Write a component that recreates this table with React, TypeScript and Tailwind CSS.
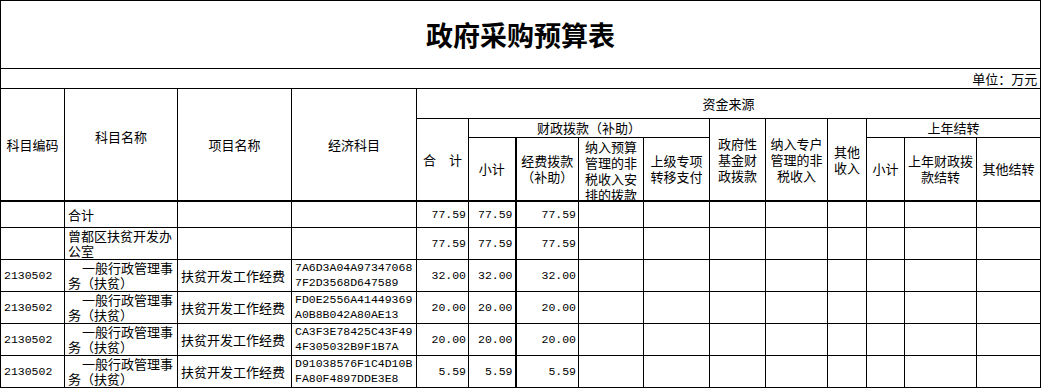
import type { ReactNode } from 'react'

type Row = {
  code: string
  name: string[]
  indent?: boolean
  proj: string
  econ: string[]
  total: string
}

const ROWS: Row[] = [
  { code: '', name: ['合计'], proj: '', econ: [], total: '77.59' },
  { code: '', name: ['曾都区扶贫开发办', '公室'], proj: '', econ: [], total: '77.59' },
  { code: '2130502', name: ['一般行政管理事', '务（扶贫）'], indent: true, proj: '扶贫开发工作经费', econ: ['7A6D3A04A97347068', '7F2D3568D647589'], total: '32.00' },
  { code: '2130502', name: ['一般行政管理事', '务（扶贫）'], indent: true, proj: '扶贫开发工作经费', econ: ['FD0E2556A41449369', 'A0B8B042A80AE13'], total: '20.00' },
  { code: '2130502', name: ['一般行政管理事', '务（扶贫）'], indent: true, proj: '扶贫开发工作经费', econ: ['CA3F3E78425C43F49', '4F305032B9F1B7A'], total: '20.00' },
  { code: '2130502', name: ['一般行政管理事', '务（扶贫）'], indent: true, proj: '扶贫开发工作经费', econ: ['D91038576F1C4D10B', 'FA80F4897DDE3E8'], total: '5.59' },
]

const COLS = [
  'w-[64px]', 'w-[113px]', 'w-[114px]', 'w-[125px]', 'w-[52px]', 'w-[47px]', 'w-[63px]', 'w-[65px]',
  'w-[66px]', 'w-[56px]', 'w-[62px]', 'w-[39px]', 'w-[38px]', 'w-[72px]', 'w-[64px]',
]

const cell = 'border border-black p-0'
const mono = "font-['Liberation_Mono',monospace] text-[11.5px]"

function Lines({ lines }: { lines: string[] }) {
  return <>{lines.map((l, i) => <div key={i}>{l}</div>)}</>
}

function Num({ v, thick, top }: { v: string; thick?: boolean; top?: string }) {
  return (
    <td className={`${cell} ${top} ${thick ? 'border-l-2' : ''} text-right pr-[2px] ${mono}`}>{v}</td>
  )
}

function Head({ children, className = '', ...rest }: { children?: ReactNode; className?: string; rowSpan?: number; colSpan?: number }) {
  return <td {...rest} className={`${cell} text-center ${className}`}>{children}</td>
}

export default function App() {
  return (
    <div className="bg-white w-[1043px] h-[388px] overflow-hidden text-black font-['Noto_Sans_CJK_SC',sans-serif] text-[13px] leading-4">
      <table className="table-fixed border-collapse w-[1041px]">
        <colgroup>
          {COLS.map((w, i) => <col key={i} className={w} />)}
        </colgroup>
        <tbody>
          <tr className="h-[68px]">
            <td colSpan={15} className={`${cell} text-center text-[27px] font-bold leading-none`}>政府采购预算表</td>
          </tr>
          <tr className="h-[20px]">
            <td colSpan={15} className={`${cell} text-right pr-[3px]`}>单位：万元</td>
          </tr>

          {/* header */}
          <tr className="h-[30px]">
            <Head rowSpan={3} className="border-b-2">科目编码</Head>
            <Head rowSpan={3} className="border-b-2 pb-4">科目名称</Head>
            <Head rowSpan={3} className="border-b-2">项目名称</Head>
            <Head rowSpan={3} className="border-b-2">经济科目</Head>
            <Head colSpan={11}>资金来源</Head>
          </tr>
          <tr className="h-[19px]">
            <Head rowSpan={2} className="border-b-2">
              <div className="flex justify-between px-[6px]"><span>合</span><span>计</span></div>
            </Head>
            <Head colSpan={4}>财政拨款（补助）</Head>
            <Head rowSpan={2} className="border-b-2"><Lines lines={['政府性', '基金财', '政拨款']} /></Head>
            <Head rowSpan={2} className="border-b-2"><Lines lines={['纳入专户', '管理的非', '税收入']} /></Head>
            <Head rowSpan={2} className="border-b-2"><Lines lines={['其他', '收入']} /></Head>
            <Head colSpan={3}>上年结转</Head>
          </tr>
          <tr className="h-[63px]">
            <Head className="border-b-2">小计</Head>
            <Head className="border-b-2 border-l-2"><Lines lines={['经费拨款', '（补助）']} /></Head>
            <Head className="border-b-2">
              <div className="h-[62px] overflow-hidden pt-[1px]">
                <Lines lines={['纳入预算', '管理的非', '税收入安', '排的拨款']} />
              </div>
            </Head>
            <Head className="border-b-2"><Lines lines={['上级专项', '转移支付']} /></Head>
            <Head className="border-b-2">小计</Head>
            <Head className="border-b-2"><Lines lines={['上年财政拨', '款结转']} /></Head>
            <Head className="border-b-2">其他结转</Head>
          </tr>

          {/* data */}
          {ROWS.map((r, i) => {
            const top = i === 0 ? 'border-t-2' : ''
            return (
              <tr key={i} className={`leading-[15px] ${i === 0 ? 'h-[26px]' : 'h-[32px]'}`}>
                <td className={`${cell} ${top} pl-[3px] ${mono}`}>{r.code}</td>
                <td className={`${cell} ${top} pl-[3px] whitespace-nowrap`}>
                  {r.name.map((l, j) => (
                    <div key={j} className={r.indent && j === 0 ? 'pl-[14px]' : ''}>{l}</div>
                  ))}
                </td>
                <td className={`${cell} ${top} pl-[3px] whitespace-nowrap`}>{r.proj}</td>
                <td className={`${cell} ${top} pl-[3px] whitespace-nowrap ${mono}`}>
                  <Lines lines={r.econ} />
                </td>
                <Num v={r.total} top={top} />
                <Num v={r.total} top={top} />
                <Num v={r.total} top={top} thick />
                {Array.from({ length: 8 }).map((_, k) => (
                  <td key={k} className={`${cell} ${top}`} />
                ))}
              </tr>
            )
          })}
        </tbody>
      </table>
    </div>
  )
}
